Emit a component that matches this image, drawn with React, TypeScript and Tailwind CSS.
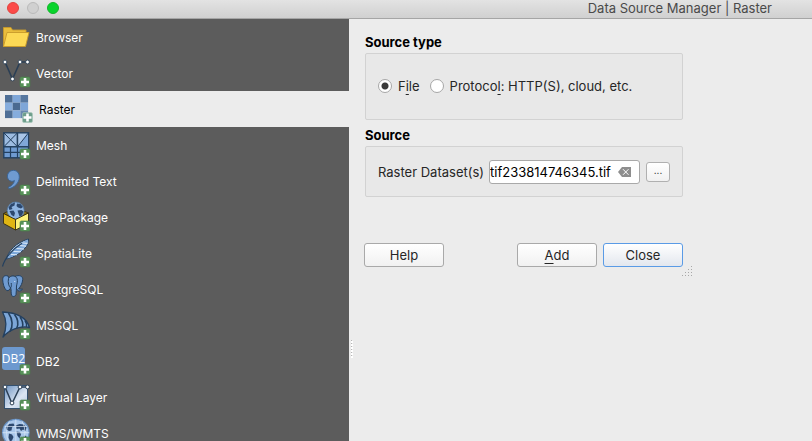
import React, { useState } from "react";

const NAVY = "#24405f";
const BLUE = "#6f9bd1";

function PlusBadge({ x = 20, y = 22, faded = false }: { x?: number; y?: number; faded?: boolean }) {
  return (
    <g transform={`translate(${x} ${y})`}>
      <rect width="10" height="10" rx="1.500" fill={faded ? "#6f9f8c" : "#579259"} stroke={faded ? "#a9c8bc" : "#4a7f4c"} strokeWidth="0.600" />
      <path d="M5 1v8M1 5h8" stroke="#fff" strokeWidth="2.600" />
    </g>
  );
}

function FolderIcon() {
  return (
    <g stroke="#c79a2a" strokeWidth="0.900" strokeLinejoin="round">
      <path d="M3.500 27.500V8.500H11l1.500 2.500H26v3L23 27.500z" fill="#e9bd3c" />
      <path d="M3.500 27.500L7 13.500h22L25.500 27.500z" fill="#fcd955" />
    </g>
  );
}

function VectorIcon() {
  return (
    <g>
      <path d="M5 7l7.500 17L20 7h7.500" fill="none" stroke="#2b3f55" strokeWidth="1.600" />
      {[[5, 7], [12.5, 24], [20, 7], [27.5, 7]].map(([x, y]) => (
        <circle key={`${x}-${y}`} cx={x} cy={y} r="1.900" fill="#fff" stroke="#2b3f55" strokeWidth="0.900" />
      ))}
      <PlusBadge />
    </g>
  );
}

function RasterIcon() {
  const tones = ["#4f6f96", "#7ea6d8", "#56779f", "#86addd", "#4a6a91", "#7ea6d8", "#4f6f96", "#86addd", "#6888b0"];
  return (
    <g>
      {tones.map((tone, i) => (
        <rect key={i} x={5 + (i % 3) * 7.7} y={4 + Math.floor(i / 3) * 7.7} width="7.700" height="7.700" fill={tone} />
      ))}
      <PlusBadge x={22.5} y={21.5} faded />
    </g>
  );
}

function MeshIcon() {
  return (
    <g stroke={NAVY} strokeWidth="1.400" fill={BLUE}>
      <rect x="3.800" y="5.800" width="13.700" height="14" fill="#9dbce2" />
      <path d="M3.800 5.800l13.700 14M17.500 5.800l-13.700 14" strokeWidth="1" />
      <rect x="17.500" y="5.800" width="11" height="14" fill="#a9c5e7" />
      <path d="M28.500 5.800v14h-11z" strokeWidth="1" fill="#7fa7d8" />
      <rect x="3.800" y="19.800" width="24.700" height="11" />
      <path d="M10.500 19.800v11M17.500 19.800v11M3.800 25.300h24.700" strokeWidth="1.200" />
      <g stroke="none"><PlusBadge /></g>
    </g>
  );
}

function CommaIcon() {
  return (
    <g>
      <path d="M12 7.500c4.500-.8 7.500 2.200 7.300 7-.2 5.200-4.500 9.800-10.300 11.300l-.6-1.500c3.600-1.600 5.700-4 6-6.800-1 .7-2.300 1-3.500.6-2.200-.5-3.600-2.500-3.500-5 .1-2.900 2-5.100 4.600-5.600z" fill={BLUE} stroke="#3b6596" strokeWidth="1" />
      <PlusBadge />
    </g>
  );
}

function GeoPackageIcon() {
  return (
    <g>
      <path d="M3.500 14.500l6-3h13l6 2.500-13 6z" fill="#8d7111" stroke="#332c12" strokeWidth="0.800" />
      <circle cx="15.700" cy="11.500" r="8.500" fill="#8fb5e2" stroke="#52779f" strokeWidth="0.800" />
      <path d="M8.500 8.500l2.500-3.500 4-1.500-.5 3-3 1.500 1 2-3 1zM17 4.500l3.500.5 2.500 3-2 1.500-3-1-1.500-1.500zM9.500 12l4-.5 1.500 2.500-1 3.500-2.500-1.500zM17.500 11.500l4-.5 2 1.500-1.500 4-2.500 1z" fill="#2c486e" />
      <path d="M3.500 14.500l12 6v10.500l-12-6.500z" fill="#e0b513" stroke="#332c12" strokeWidth="0.900" />
      <path d="M15.500 20.500l13-6.500v10.500l-13 6.500z" fill="#fbf27a" stroke="#332c12" strokeWidth="0.900" />
      <PlusBadge />
    </g>
  );
}

function FeatherIcon() {
  return (
    <g>
      <path d="M6.500 24C8 16.500 16 7.500 28.500 4c.3 4-1.300 6.800-3.500 9-3.500 4.500-9.500 8.500-18.500 11z" fill="#bdd4ee" stroke={NAVY} strokeWidth="1" />
      <path d="M7.500 23.500C12 15 19 8.500 28 4.500c0 3.500-1.500 6-3.500 8.300-4 4.500-9.500 8.200-17 10.700z" fill="#7ba6d9" />
      <path d="M11 19.500l6 .3M13.500 16.500l7.500.3M16.500 13.500l7.500.5M19.500 10.500l6.500.6M22.500 8l5 .4" stroke="#dce9f7" strokeWidth="1.100" />
      <path d="M2.500 31.500C4.500 23.500 12.500 14 22 8.300" fill="none" stroke={NAVY} strokeWidth="1.200" />
      <PlusBadge />
    </g>
  );
}

function ElephantIcon() {
  return (
    <g stroke={NAVY} strokeWidth="1" strokeLinejoin="round" fill={BLUE}>
      <path d="M8 5C4 3.800 2.300 6 2.800 10c.4 4 2 8.500 4 9.500 1.600.7 3-1 3.700-2.500L9.500 8z" />
      <path d="M15 5.500c4-2 8-.5 7.700 3-.2 3.500-2 7-4.200 9.500l4 .2c-1.300 1.700-3 2-4.500 1.600l-2-3z" />
      <path d="M8.500 7.500C10.500 4 15.500 4 17 7.500c.9 2.500 0 5-.5 7.500-.4 3 .1 6-.5 8.500-.8 2.500-3.800 2.700-4.500.5-.7-2.500 0-5-.8-7-2-1.500-3-5.500-2.200-9.500z" />
      <path d="M10.500 17c1-1.200 1-3 .7-5" fill="none" />
      <circle cx="14.800" cy="10.500" r=".6" fill="#dce9f7" stroke="none" />
      <g stroke="none"><PlusBadge /></g>
    </g>
  );
}

function SqlServerIcon() {
  return (
    <g stroke={NAVY} strokeWidth="1.300" strokeLinejoin="round">
      <path d="M2.500 5C15 5.500 26 9 29.500 20.500c-9-2-20 2-26.500 9.500C7 21 7 13 2.500 5z" fill="#7ca6d8" />
      <path d="M8.500 6c4.500 6.500 4.500 14 1.500 18.500M14.500 7.500c4 5 4.200 9.500 2.200 14M20 10c3 4 3.500 7 2.300 10.500M25 13.500c1.500 2 2 4 1.500 6.500" fill="none" strokeWidth="1.600" />
      <g stroke="none"><PlusBadge /></g>
    </g>
  );
}

function Db2Icon() {
  return (
    <g>
      <rect x="2" y="4" width="23" height="23" rx="3" fill="#6d99cf" />
      <text x="13.500" y="20" textAnchor="middle" className="fill-white font-['Liberation_Sans_Narrow','Open_Sans',sans-serif] text-[12px]">DB2</text>
      <PlusBadge y={21.5} />
    </g>
  );
}

function VirtualLayerIcon() {
  return (
    <g>
      <defs>
        <linearGradient id="virtual-fill" x1="0" y1="0" x2="1" y2="1">
          <stop offset="0" stopColor="#6f94c2" />
          <stop offset="0.600" stopColor="#dbe5f2" />
          <stop offset="1" stopColor="#b7cbe4" />
        </linearGradient>
      </defs>
      <rect x="4.500" y="6.500" width="23" height="23" fill="url(#virtual-fill)" stroke="#35516f" />
      <path d="M5 8l7 16.500L20 8h7.500" fill="none" stroke="#2b3f55" strokeWidth="1.500" />
      {[[5, 8], [12, 24], [20, 8], [27.5, 8]].map(([x, y]) => (
        <circle key={`${x}-${y}`} cx={x} cy={y} r="1.900" fill="#fff" stroke="#2b3f55" />
      ))}
      <PlusBadge y={21} />
    </g>
  );
}

function GlobeIcon() {
  return (
    <g>
      <circle cx="15.800" cy="17.700" r="13.300" fill="#a9c7ea" stroke="#6a94c6" strokeWidth="1.200" />
      <path d="M6 11.500l3-2.500 4.500-.5 1 2-2.500 2-.5 3-2.500.5-2.500-1.500zM15.500 10.500l4-1.500 4.500.5 2.500 3-1 3.500-2.500-1.500-2 1.500-1.500-2.500-3 .5zM9 18.500l3 1 1.500 2.500-1.500 3.500-2 1-1.500-4zM16.500 16.500l3.500.5 1 2.500-1.500 4-2-2.500zM24 20.500l2.500.5-1 2.500-2-.5z" fill="#2c486e" />
      <path d="M2.500 17.700h26.600M15.800 4.400v26.600M4.500 11.500h22.600M9.500 6q-6 11 0 23M22 6q6 11 0 23" fill="none" stroke="#dbe8f6" strokeWidth="0.700" />
      <PlusBadge />
    </g>
  );
}

const SOURCES = [
  { name: "Browser", Icon: FolderIcon },
  { name: "Vector", Icon: VectorIcon },
  { name: "Raster", Icon: RasterIcon },
  { name: "Mesh", Icon: MeshIcon },
  { name: "Delimited Text", Icon: CommaIcon },
  { name: "GeoPackage", Icon: GeoPackageIcon },
  { name: "SpatiaLite", Icon: FeatherIcon },
  { name: "PostgreSQL", Icon: ElephantIcon },
  { name: "MSSQL", Icon: SqlServerIcon },
  { name: "DB2", Icon: Db2Icon },
  { name: "Virtual Layer", Icon: VirtualLayerIcon },
  { name: "WMS/WMTS", Icon: GlobeIcon },
];

function TitleBar() {
  return (
    <header className="flex h-[19px] shrink-0 items-center justify-between border-b border-[#a5a5a5] bg-linear-to-b from-[#e3e3e3] to-[#d0d0d0] pr-10 pl-[7px]">
      <div className="flex gap-2 pb-[2px]">
        <button aria-label="Close window" className="size-3 rounded-full border border-[#e0443e] bg-[#fc4a48]" />
        <button aria-label="Minimize window" className="size-3 rounded-full border border-[#bababa] bg-[#d0d0d0]" />
        <button aria-label="Zoom window" className="size-3 rounded-full border border-[#12b52a] bg-[#08d42c]" />
      </div>
      <h1 className="pb-[2px] text-[13px] leading-4 text-[#4a4a4a]">Data Source Manager | Raster</h1>
    </header>
  );
}

function Sidebar({ selected, onSelect }: { selected: string; onSelect: (name: string) => void }) {
  return (
    <nav className="w-[349px] shrink-0 overflow-hidden bg-[#5c5c5c]">
      {SOURCES.map(({ name, Icon }) => {
        const active = name === selected;
        return (
          <button
            key={name}
            onClick={() => onSelect(name)}
            className={`flex h-9 w-full items-center text-left text-[12px] leading-4 ${active ? "gap-[5px] bg-[#ececec] text-black" : "gap-[2px] text-white"}`}
          >
            <svg width="34" height="36" viewBox="0 0 34 36" className="shrink-0" aria-hidden="true">
              <Icon />
            </svg>
            <span className="pt-px">{name}</span>
          </button>
        );
      })}
    </nav>
  );
}

function Group({ title, children }: { title: string; children: React.ReactNode }) {
  return (
    <section className="pl-px">
      <h2 className="pb-[2px] text-[13px] leading-[18px] font-bold text-black">{title}</h2>
      <div className="rounded-[2px] border border-[#d2d2d2] bg-[#e8e8e8] px-3">{children}</div>
    </section>
  );
}

function Radio({ checked, onChange, children }: { checked: boolean; onChange: () => void; children: React.ReactNode }) {
  return (
    <label className="flex items-center gap-[6px]">
      <input
        type="radio"
        name="source-type"
        checked={checked}
        onChange={onChange}
        className="size-[14px] appearance-none rounded-full border border-[#a6a6a6] bg-white checked:bg-[radial-gradient(circle,#3a3a3a_0,#3a3a3a_3px,#fff_4px)]"
      />
      <span>{children}</span>
    </label>
  );
}

const UNDERLINE = "underline decoration-1 underline-offset-3";
const PUSH = "h-6 w-20 rounded-[3px] border bg-linear-to-b text-[13px] leading-4 text-[#262626]";

export default function App() {
  const [selected, setSelected] = useState("Raster");
  const [type, setType] = useState("file");
  const [path, setPath] = useState("tif233814746345.tif");

  return (
    <div className="flex h-screen flex-col overflow-hidden bg-[#ececec] font-[Inter,'Liberation_Sans',sans-serif]">
      <TitleBar />
      <div className="flex min-h-0 flex-1">
        <Sidebar selected={selected} onSelect={setSelected} />
        <div className="flex w-[15px] shrink-0 items-center pt-[238px] pl-px">
          <svg width="3" height="18" aria-hidden="true">
            {[0, 3, 6, 9, 12, 15].map((y) => (
              <g key={y}>
                <rect x="1" y={y + 1} width="2" height="2" fill="#fff" />
                <rect x="1" y={y} width="1" height="1" fill="#b5b5b5" />
              </g>
            ))}
          </svg>
        </div>
        <main className="min-w-0 flex-1 pt-[14px] text-[13px] leading-4 text-[#262626]">
          <div className="w-[329px]">
            <div className="flex flex-col gap-[6px] pr-[10px]">
              <Group title="Source type">
                <div className="flex h-[65px] items-center gap-[10px] pb-px">
                  <Radio checked={type === "file"} onChange={() => setType("file")}>
                    F<span className={UNDERLINE}>i</span>le
                  </Radio>
                  <Radio checked={type === "protocol"} onChange={() => setType("protocol")}>
                    Protoco<span className={UNDERLINE}>l</span>: HTTP(S), cloud, etc.
                  </Radio>
                </div>
              </Group>
              <Group title="Source">
                <div className="flex h-[49px] items-center justify-between">
                  <label htmlFor="dataset" className="shrink-0">Raster Dataset(s)</label>
                  <div className="flex items-center gap-[6px]">
                    <div className="flex h-6 w-[151px] items-center rounded-[3px] border border-[#a9a9a9] bg-white pr-2">
                      <input
                        id="dataset"
                        value={path}
                        onChange={(e) => setPath(e.target.value)}
                        className="min-w-0 flex-1 text-[13px] leading-4 text-black outline-none"
                      />
                      <button aria-label="Clear" onClick={() => setPath("")}>
                        <svg width="13" height="10" viewBox="0 0 13 10" aria-hidden="true">
                          <path d="M4 0h9v10H4L0 5z" fill="#8e8e8e" />
                          <path d="M5 2.200l5.500 5.600M10.500 2.200L5 7.800" stroke="#fff" strokeWidth="1" />
                        </svg>
                      </button>
                    </div>
                    <button aria-label="Browse" className="h-5 w-6 rounded-[3px] border border-[#b0b0b0] bg-linear-to-b from-white to-[#f1f1f1] pb-1 text-[10px] leading-3">
                      ...
                    </button>
                  </div>
                </div>
              </Group>
            </div>
            <div className="flex gap-[6px] pt-[46px] pr-[10px]">
              <button className={`${PUSH} mr-auto border-[#a9a9a9] from-white to-[#f1f1f1]`}>Help</button>
              <button className={`${PUSH} border-[#a9a9a9] from-white to-[#f1f1f1]`}>
                <span className={UNDERLINE}>A</span>dd
              </button>
              <button className={`${PUSH} border-[#5a9be6] from-white to-[#e3e7ee]`}>Close</button>
            </div>
            <svg width="11" height="11" className="-mt-px ml-auto" aria-hidden="true">
              {[[9, 0], [6, 3], [9, 3], [3, 6], [6, 6], [9, 6], [0, 9], [3, 9], [6, 9], [9, 9]].map(([x, y]) => (
                <rect key={`${x}-${y}`} x={x} y={y} width="1" height="1" fill="#a8a8a8" />
              ))}
            </svg>
          </div>
        </main>
      </div>
    </div>
  );
}
